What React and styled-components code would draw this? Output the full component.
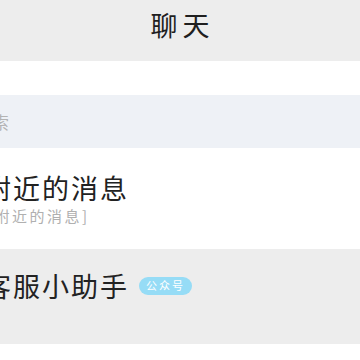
import React from 'react';
import styled, { createGlobalStyle } from 'styled-components';

const GlobalStyle = createGlobalStyle`
  html, body {
    margin: 0;
    padding: 0;
    background: #ffffff;
  }
  body {
    font-family: "Noto Sans CJK SC", "Noto Sans", sans-serif;
  }
`;

const Page = styled.div`
  width: 360px;
  height: 360px;
  overflow: hidden;
  background: #ffffff;
  display: flex;
  flex-direction: column;
`;

const TopBar = styled.div`
  height: 61px;
  flex: none;
  box-sizing: border-box;
  padding-top: 11px;
  background: #ededed;
  display: flex;
  align-items: flex-start;
  justify-content: center;
`;

const TopTitle = styled.h1`
  margin: 0;
  font-size: 27px;
  font-weight: 400;
  line-height: 1;
  letter-spacing: 5px;
  padding-left: 5px;
  color: #1f1f1f;
`;

const Spacer = styled.div`
  height: 34px;
  flex: none;
`;

const SearchBar = styled.div`
  height: 53px;
  flex: none;
  background: #eef1f6;
  display: flex;
  align-items: center;
`;

const SearchText = styled.span`
  margin-left: -25px;
  font-size: 17px;
  line-height: 1;
  color: #b3b3b3;
`;

const ChatRow = styled.div`
  height: ${(p) => p.$h}px;
  flex: none;
  background: ${(p) => (p.$active ? '#ededed' : '#ffffff')};
  box-sizing: border-box;
  padding-top: ${(p) => p.$top}px;
`;

const Body = styled.div`
  margin-left: -16px;
  display: flex;
  flex-direction: column;
  gap: 7px;
`;

const NameLine = styled.div`
  display: flex;
  align-items: center;
  gap: 10px;
`;

const Name = styled.span`
  font-size: 27px;
  line-height: 1;
  letter-spacing: 2px;
  color: #222222;
`;

const Preview = styled.span`
  font-size: 15px;
  line-height: 1;
  letter-spacing: 2.5px;
  margin-left: 3px;
  color: #b0b0b0;
`;

const Badge = styled.span`
  display: inline-flex;
  align-items: center;
  justify-content: center;
  width: 53px;
  height: 18px;
  border-radius: 9px;
  background: #96dcf6;
  color: #ffffff;
  font-size: 11px;
  letter-spacing: 2px;
  line-height: 1;
`;

export default function App() {
  return (
    <Page>
      <GlobalStyle />
      <TopBar>
        <TopTitle>聊天</TopTitle>
      </TopBar>
      <Spacer />
      <SearchBar>
        <SearchText>搜索</SearchText>
      </SearchBar>
      <ChatRow $h={101} $top={26}>
        <Body>
          <Name>附近的消息</Name>
          <Preview>[附近的消息]</Preview>
        </Body>
      </ChatRow>
      <ChatRow $h={95} $top={23} $active>
        <Body>
          <NameLine>
            <Name>客服小助手</Name>
            <Badge>公众号</Badge>
          </NameLine>
        </Body>
      </ChatRow>
    </Page>
  );
}
